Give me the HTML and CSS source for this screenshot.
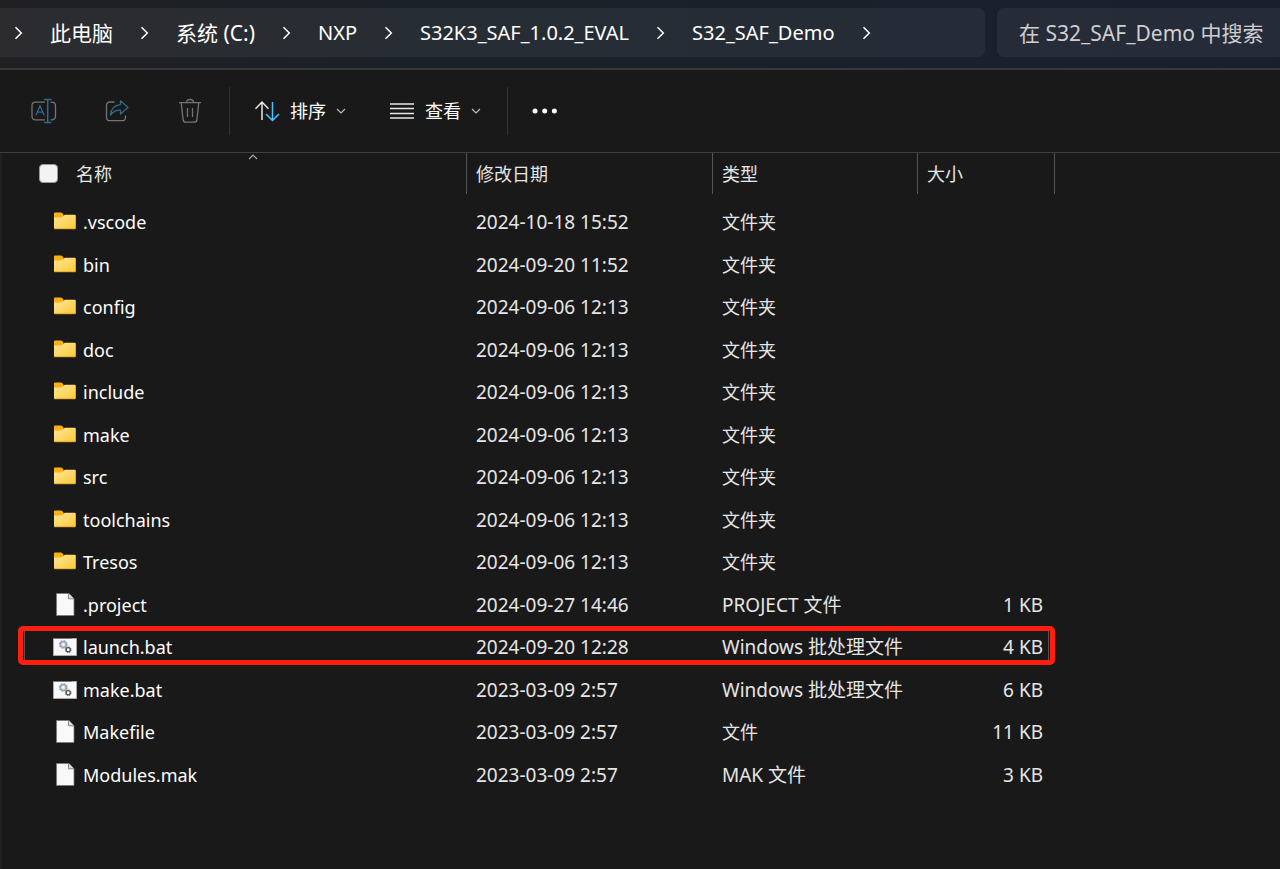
FILE: index.html
```html
<!DOCTYPE html>
<html lang="zh-CN">
<head>
<meta charset="utf-8">
<meta name="viewport" content="width=device-width, initial-scale=1">
<title>S32_SAF_Demo</title>
<link rel="stylesheet" href="styles.css">
</head>
<body>
<svg class="defs" aria-hidden="true">
  <defs>
    <linearGradient id="folder-fill" x1="0" y1="0" x2="1" y2="1">
      <stop offset="0" stop-color="#ffe69a"/><stop offset="1" stop-color="#fdc937"/>
    </linearGradient>
    <symbol id="chevron" viewBox="0 0 8 14">
      <path d="M1 1.200 6.800 7 1 12.800" fill="none" stroke="currentColor" stroke-width="1.500"/>
    </symbol>
    <symbol id="caret" viewBox="0 0 10 6">
      <path d="M1 1l4 4 4-4" fill="none" stroke="currentColor" stroke-width="1.200"/>
    </symbol>
    <symbol id="folder" viewBox="0 1 24 24">
      <path d="M1 4.500q0-1 1-1h6q.7 0 1.100.5l1.400 1.500V10H1z" fill="#f8b117"/>
      <path d="M1 8.500h7.300q.5 0 .9-.4L11 6.200q.4-.4 1-.4h9.800q1 0 1 1v12.200q0 1-1 1H2q-1 0-1-1z" fill="url(#folder-fill)"/>
      <path d="M1.300 19.800h21.200" stroke="#dc9d1c" stroke-width=".8"/>
    </symbol>
    <symbol id="file" viewBox="0 1 24 24">
      <path d="M3.500 1.500H16L21 6.800V23.500H3.500z" fill="#f9f9f9" stroke="#777" stroke-width=".7"/>
      <path d="M15.500 1.500v5.300h5.400" fill="#ddd" stroke="#777" stroke-width=".9"/>
    </symbol>
    <symbol id="batch" viewBox="0 0 24 24">
      <path d="M.5 3.500h23v17H.5z" fill="#f8f8f8" stroke="#aaa"/>
      <path d="M.5 3.500h18" stroke="#777"/>
      <circle cx="10.300" cy="9.500" r="3" fill="#d5dce3" stroke="#98a5b2" stroke-width="1.500"/>
      <circle cx="10.300" cy="9.500" r="3.900" fill="none" stroke="#98a5b2" stroke-width="1.200" stroke-dasharray="1.500 1.560"/>
      <circle cx="10.300" cy="9.500" r="1" fill="#fff"/>
      <circle cx="15.200" cy="14.800" r="2.100" fill="#fff" stroke="#4b5258" stroke-width="1.300"/>
      <circle cx="15.200" cy="14.800" r="2.900" fill="none" stroke="#4b5258" stroke-width=".9" stroke-dasharray="1.140 1.140"/>
    </symbol>
  </defs>
</svg>

<header class="address">
  <nav class="crumbs" aria-label="路径">
    <svg class="chevron"><use href="#chevron"/></svg>
    <a href="#">此电脑</a>
    <svg class="chevron"><use href="#chevron"/></svg>
    <a href="#">系统 (C:)</a>
    <svg class="chevron"><use href="#chevron"/></svg>
    <a class="latin" href="#">NXP</a>
    <svg class="chevron"><use href="#chevron"/></svg>
    <a class="latin" href="#">S32K3_SAF_1.0.2_EVAL</a>
    <svg class="chevron"><use href="#chevron"/></svg>
    <a class="latin" href="#">S32_SAF_Demo</a>
    <svg class="chevron"><use href="#chevron"/></svg>
  </nav>
  <input class="search" type="text" aria-label="搜索" placeholder="在 S32_SAF_Demo 中搜索">
</header>

<div class="commands" role="toolbar" aria-label="命令栏">
  <div class="group tools">
    <button class="icon-btn" type="button" aria-label="重命名">
      <svg viewBox="0 0 26 26" fill="none" stroke-width="1.300">
        <g stroke="#747474"><path d="M14 4.200H4.500q-3.500 0-3.500 3.500v10.600q0 3.500 3.500 3.500H14"/><path d="M19.500 4.200h1q4 0 4 3.800v10q0 3.800-4 3.800h-1"/></g>
        <g stroke="#2f6b8b"><path d="M16.700 1.700v22.600M13 1.500h7.400M13 24.500h7.400" stroke-width="1.500"/><path d="M4.800 17.500 9 7.800l4.200 9.700M6.200 14.200h5.600"/></g>
      </svg>
    </button>
    <button class="icon-btn" type="button" aria-label="共享">
      <svg viewBox="0 0 26 26" fill="none" stroke-width="1.300" stroke-linejoin="round">
        <path d="M10.500 4H6Q2.500 4 2.500 7.500v11.700q0 3.500 3.500 3.500h12q3.500 0 3.500-3.500v-1.700" stroke="#747474"/>
        <path d="M16.500 2.800 24 9.500l-7.500 6.500v-3.800q-6-.5-10 5Q7 7.700 16.500 6.700z" stroke="#2f6b8b"/>
      </svg>
    </button>
    <button class="icon-btn" type="button" aria-label="删除">
      <svg viewBox="0 0 26 26" fill="none" stroke="#747474" stroke-width="1.300">
        <path d="M2 4.600h22M9.500 4.500q0-3 3.500-3t3.500 3M4.200 4.600l1.900 17q.3 2.600 2.800 2.600h8.200q2.500 0 2.800-2.600l1.900-17M10.500 10v9M15.500 10v9"/>
      </svg>
    </button>
  </div>
  <div class="group menus">
    <button class="menu-btn" type="button">
      <svg class="menu-icon" viewBox="0 0 26 26" fill="none" stroke-width="1.500"><path d="M8 22V4M1.500 10.700 8 4l6.500 6.700" stroke="#e8e8e8"/><path d="M18.500 4v18.500M12 16l6.500 6.500L25 16" stroke="#4cc2ff"/></svg>
      <span>排序</span>
      <svg class="caret"><use href="#caret"/></svg>
    </button>
    <button class="menu-btn" type="button">
      <svg class="menu-icon" viewBox="0 0 26 26" stroke="#e8e8e8" stroke-width="1.400"><path d="M1 6h24M1 10.500h24M1 15.500h24M1 20h24"/></svg>
      <span>查看</span>
      <svg class="caret"><use href="#caret"/></svg>
    </button>
  </div>
  <button class="more-btn" type="button" aria-label="更多">
    <svg viewBox="0 0 26 26" fill="#fff"><circle cx="3" cy="13" r="2.500"/><circle cx="12.700" cy="13" r="2.500"/><circle cx="22.400" cy="13" r="2.500"/></svg>
  </button>
</div>

<main class="files">
  <table>
    <colgroup><col class="c-name"><col class="c-date"><col class="c-type"><col class="c-size"></colgroup>
    <thead>
      <tr>
        <th scope="col"><div class="name-head"><input type="checkbox" aria-label="全选"><span>名称</span></div><svg class="sort"><use href="#caret"/></svg></th>
        <th scope="col">修改日期</th>
        <th scope="col">类型</th>
        <th scope="col">大小</th>
      </tr>
    </thead>
    <tbody>
      <tr><td><div class="name"><svg><use href="#folder"/></svg>.vscode</div></td><td>2024-10-18 15:52</td><td class="kind">文件夹</td><td></td></tr>
      <tr><td><div class="name"><svg><use href="#folder"/></svg>bin</div></td><td>2024-09-20 11:52</td><td class="kind">文件夹</td><td></td></tr>
      <tr><td><div class="name"><svg><use href="#folder"/></svg>config</div></td><td>2024-09-06 12:13</td><td class="kind">文件夹</td><td></td></tr>
      <tr><td><div class="name"><svg><use href="#folder"/></svg>doc</div></td><td>2024-09-06 12:13</td><td class="kind">文件夹</td><td></td></tr>
      <tr><td><div class="name"><svg><use href="#folder"/></svg>include</div></td><td>2024-09-06 12:13</td><td class="kind">文件夹</td><td></td></tr>
      <tr><td><div class="name"><svg><use href="#folder"/></svg>make</div></td><td>2024-09-06 12:13</td><td class="kind">文件夹</td><td></td></tr>
      <tr><td><div class="name"><svg><use href="#folder"/></svg>src</div></td><td>2024-09-06 12:13</td><td class="kind">文件夹</td><td></td></tr>
      <tr><td><div class="name"><svg><use href="#folder"/></svg>toolchains</div></td><td>2024-09-06 12:13</td><td class="kind">文件夹</td><td></td></tr>
      <tr><td><div class="name"><svg><use href="#folder"/></svg>Tresos</div></td><td>2024-09-06 12:13</td><td class="kind">文件夹</td><td></td></tr>
      <tr><td><div class="name"><svg><use href="#file"/></svg>.project</div></td><td>2024-09-27 14:46</td><td>PROJECT 文件</td><td class="size">1 KB</td></tr>
      <tr class="marked"><td><div class="name"><svg><use href="#batch"/></svg>launch.bat</div><div class="marker"></div></td><td>2024-09-20 12:28</td><td>Windows 批处理文件</td><td class="size">4 KB</td></tr>
      <tr><td><div class="name"><svg><use href="#batch"/></svg>make.bat</div></td><td>2023-03-09 2:57</td><td>Windows 批处理文件</td><td class="size">6 KB</td></tr>
      <tr><td><div class="name"><svg><use href="#file"/></svg>Makefile</div></td><td>2023-03-09 2:57</td><td class="kind">文件</td><td class="size">11 KB</td></tr>
      <tr><td><div class="name"><svg><use href="#file"/></svg>Modules.mak</div></td><td>2023-03-09 2:57</td><td>MAK 文件</td><td class="size">3 KB</td></tr>
    </tbody>
  </table>
</main>
</body>
</html>
```
FILE: styles.css
```css
* { box-sizing: border-box; }

body {
  margin: 0;
  min-height: 100vh;
  display: flex;
  flex-direction: column;
  background: #191919;
  color: #e6e6e6;
  font: 19px/24px "Noto Sans", "Noto Sans CJK SC", sans-serif;
}

svg { display: block; flex: none; }
button, input { font: inherit; color: inherit; }
button { border: 0; padding: 0; background: none; }
.defs { position: absolute; width: 0; height: 0; }

/* Address bar */
.address {
  display: flex;
  gap: 12px;
  padding: 8px 0 11px;
  border-bottom: 2px solid #383838;
  background: linear-gradient(90deg, #202023, #1b2129 33%, #1a202c 75%, #1a1f2e);
  font-size: 21px;
}
.crumbs {
  flex: 1;
  display: flex;
  align-items: center;
  gap: 27px;
  height: 49px;
  padding-left: 14px;
  border-radius: 0 7px 7px 0;
  background: rgba(255, 255, 255, .055);
  white-space: nowrap;
}
.crumbs a { color: #fff; text-decoration: none; }
.crumbs .latin { font-size: 20px; }
.chevron { width: 9px; height: 14px; color: #fff; }
.search {
  width: 283px;
  height: 49px;
  padding: 0 0 0 22px;
  border: 0;
  border-radius: 7px 0 0 7px;
  background: rgba(255, 255, 255, .055);
}
.search::placeholder { color: #cfcfd1; opacity: 1; }

/* Command bar */
.commands {
  display: flex;
  align-items: center;
  height: 83px;
  border-bottom: 1px solid #3f3f3f;
}
.group {
  display: flex;
  align-items: center;
  height: 48px;
  border-right: 1px solid #333;
}
.tools { gap: 47px; width: 230px; padding-left: 31px; }
.menus { gap: 43px; width: 278px; padding-left: 24px; }
.icon-btn svg, .menu-icon, .more-btn svg { width: 26px; height: 26px; }
.menu-btn { display: flex; align-items: center; gap: 10px; color: #fff; font-size: 18px; }
.caret { width: 10px; height: 6px; color: #bbb; }
.more-btn { padding-left: 24px; }

/* File list */
.files { flex: 1; border-left: 2px solid #202020; }
table { width: 1053px; table-layout: fixed; border-collapse: separate; border-spacing: 0; }
.c-name { width: 465px; }
.c-date { width: 246px; }
.c-type { width: 205px; }
.c-size { width: 137px; }
th {
  position: relative;
  height: 41px;
  padding: 0 0 0 9px;
  border-right: 1px solid #555;
  font-size: 18px;
  font-weight: 400;
  text-align: left;
}
.name-head { display: flex; align-items: center; gap: 18px; padding-left: 28px; }
.name-head input {
  appearance: none;
  width: 19px;
  height: 19px;
  margin: 0;
  border: 1px solid #999;
  border-radius: 4px;
  background: #f3f3f3;
}
.sort { position: absolute; top: 1px; left: 245px; width: 12px; height: 6px; color: #aaa; transform: rotate(180deg); }
tbody::before { content: ""; display: block; height: 7px; }
td { height: 42px; padding: 0 0 0 9px; }
tbody tr:nth-child(even) td { height: 43px; }
.name { display: flex; align-items: center; gap: 6px; padding-left: 42px; color: #fff; font-size: 18px; }
.name svg { width: 24px; height: 24px; }
td.kind { font-size: 18px; }
td.size { padding: 0 12px 0 0; text-align: right; }
.marked { position: relative; }
.marker {
  position: absolute;
  inset: 0 0 3px 16px;
  border: 5px solid #ff1f10;
  border-radius: 5px;
}
.marker::after {
  content: "";
  position: absolute;
  inset: 0 1px;
  border: solid #555;
  border-width: 0 1px;
}
```
